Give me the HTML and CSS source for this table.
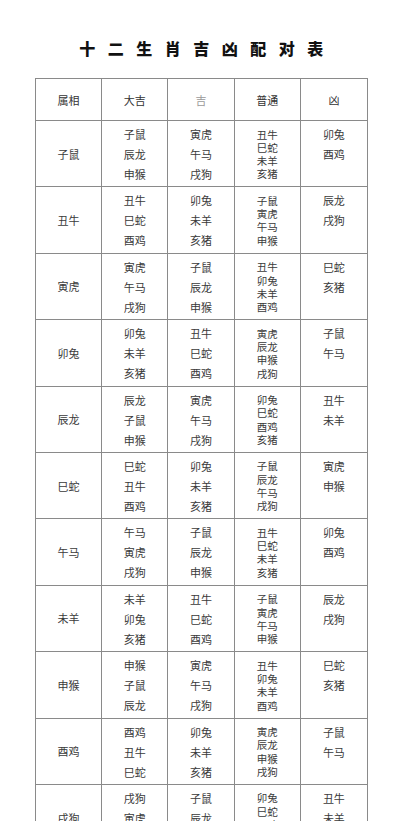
FILE: index.html
```html
<!DOCTYPE html>
<html lang="zh-CN">
<head>
<meta charset="utf-8">
<title>十二生肖吉凶配对表</title>
<link rel="stylesheet" href="styles.css">
</head>
<body>
<h1 class="title">十二生肖吉凶配对表</h1>
<table class="chart">
  <colgroup><col class="c"><col class="c"><col class="c"><col class="c"><col class="c5"></colgroup>
  <thead>
    <tr><th>属相</th><th>大吉</th><th class="light">吉</th><th>普通</th><th>凶</th></tr>
  </thead>
  <tbody>
    <tr><td class="sign">子鼠</td><td class="l3">子鼠<br>辰龙<br>申猴</td><td class="l3">寅虎<br>午马<br>戌狗</td><td class="l4">丑牛<br>巳蛇<br>未羊<br>亥猪</td><td class="l3">卯兔<br>酉鸡</td></tr>
    <tr><td class="sign">丑牛</td><td class="l3">丑牛<br>巳蛇<br>酉鸡</td><td class="l3">卯兔<br>未羊<br>亥猪</td><td class="l4">子鼠<br>寅虎<br>午马<br>申猴</td><td class="l3">辰龙<br>戌狗</td></tr>
    <tr><td class="sign">寅虎</td><td class="l3">寅虎<br>午马<br>戌狗</td><td class="l3">子鼠<br>辰龙<br>申猴</td><td class="l4">丑牛<br>卯兔<br>未羊<br>酉鸡</td><td class="l3">巳蛇<br>亥猪</td></tr>
    <tr><td class="sign">卯兔</td><td class="l3">卯兔<br>未羊<br>亥猪</td><td class="l3">丑牛<br>巳蛇<br>酉鸡</td><td class="l4">寅虎<br>辰龙<br>申猴<br>戌狗</td><td class="l3">子鼠<br>午马</td></tr>
    <tr><td class="sign">辰龙</td><td class="l3">辰龙<br>子鼠<br>申猴</td><td class="l3">寅虎<br>午马<br>戌狗</td><td class="l4">卯兔<br>巳蛇<br>酉鸡<br>亥猪</td><td class="l3">丑牛<br>未羊</td></tr>
    <tr><td class="sign">巳蛇</td><td class="l3">巳蛇<br>丑牛<br>酉鸡</td><td class="l3">卯兔<br>未羊<br>亥猪</td><td class="l4">子鼠<br>辰龙<br>午马<br>戌狗</td><td class="l3">寅虎<br>申猴</td></tr>
    <tr><td class="sign">午马</td><td class="l3">午马<br>寅虎<br>戌狗</td><td class="l3">子鼠<br>辰龙<br>申猴</td><td class="l4">丑牛<br>巳蛇<br>未羊<br>亥猪</td><td class="l3">卯兔<br>酉鸡</td></tr>
    <tr><td class="sign">未羊</td><td class="l3">未羊<br>卯兔<br>亥猪</td><td class="l3">丑牛<br>巳蛇<br>酉鸡</td><td class="l4">子鼠<br>寅虎<br>午马<br>申猴</td><td class="l3">辰龙<br>戌狗</td></tr>
    <tr><td class="sign">申猴</td><td class="l3">申猴<br>子鼠<br>辰龙</td><td class="l3">寅虎<br>午马<br>戌狗</td><td class="l4">丑牛<br>卯兔<br>未羊<br>酉鸡</td><td class="l3">巳蛇<br>亥猪</td></tr>
    <tr><td class="sign">酉鸡</td><td class="l3">酉鸡<br>丑牛<br>巳蛇</td><td class="l3">卯兔<br>未羊<br>亥猪</td><td class="l4">寅虎<br>辰龙<br>申猴<br>戌狗</td><td class="l3">子鼠<br>午马</td></tr>
    <tr><td class="sign">戌狗</td><td class="l3">戌狗<br>寅虎<br>午马</td><td class="l3">子鼠<br>辰龙<br>申猴</td><td class="l4">卯兔<br>巳蛇<br>酉鸡<br>亥猪</td><td class="l3">丑牛<br>未羊</td></tr>
  </tbody>
</table>
</body>
</html>
```
FILE: styles.css
```css
html, body {
  margin: 0;
  padding: 0;
  background: #ffffff;
}
body {
  font-family: "Noto Sans CJK SC", "Noto Sans", sans-serif;
  color: #3a3a3a;
}
.title {
  margin: 0;
  padding-top: 38px;
  padding-left: 12px;
  height: 40px;
  box-sizing: content-box;
  text-align: center;
  font-size: 16px;
  line-height: 20px;
  font-weight: 900;
  letter-spacing: 12.5px;
  color: #111111;
}
.chart {
  margin-left: 35px;
  width: 333px;
  border-collapse: collapse;
  table-layout: fixed;
  font-size: 11px;
}
.chart col.c { width: 66px; }
.chart col.c5 { width: 67px; }
.chart th, .chart td {
  border: 1px solid #8a8a8a;
  padding: 0;
  text-align: center;
}
.chart th {
  height: 41px;
  font-weight: 400;
  font-size: 11px;
  vertical-align: middle;
  color: #333;
}
.chart th.light { color: #9a9a9a; }
.chart tbody tr { height: 66.4px; }
.chart td.sign { vertical-align: middle; }
.chart td.l3 {
  vertical-align: top;
  line-height: 20px;
  padding-top: 3px;
}
.chart td.l4 {
  vertical-align: top;
  font-size: 10.5px;
  line-height: 13.3px;
  padding-top: 6.5px;
}
```
